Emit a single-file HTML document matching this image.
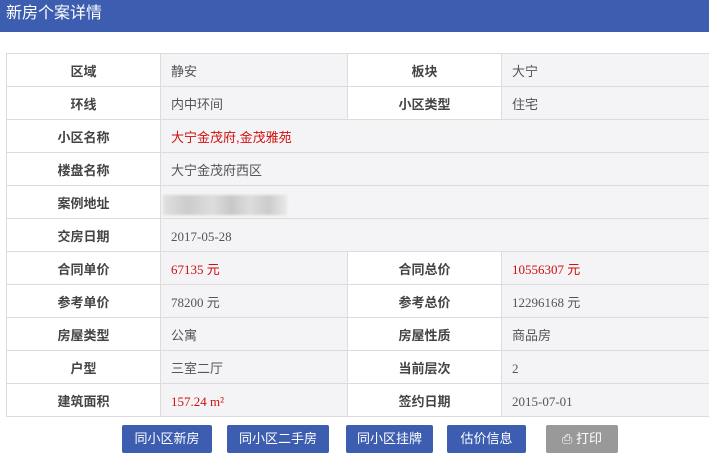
<!DOCTYPE html>
<html><head><meta charset="utf-8"><style>
body{margin:0;width:709px;height:467px;background:#fff;overflow:hidden;font-family:"Liberation Sans","Noto Sans CJK SC",sans-serif;position:relative}
.hd{position:absolute;left:0;top:0;width:709px;height:32px;background:#3c5db0;color:#fff;font-size:16px;line-height:28px;text-indent:6px}
table{position:absolute;left:6px;top:53px;border-collapse:collapse;width:710px;table-layout:fixed}
td{border:1px solid #dcdcdc;height:29px;padding:3px 0 0;font-size:13px;color:#444;line-height:29px;vertical-align:middle;white-space:nowrap;overflow:hidden}
td.l{background:#fff;text-align:center;font-weight:bold;color:#444}
td.v{background:#f4f3f5;padding-left:10px;color:#555}
.r{color:#d01010!important}
.n{font-family:"Liberation Serif","Noto Sans CJK SC",serif;font-size:13px}
.btn{position:absolute;top:425px;height:28px;line-height:28px;color:#fff;font-size:13px;text-align:center;background:#3c5db0;border-radius:2px}
.blur{display:inline-block;height:20px;width:124px;vertical-align:middle;background:linear-gradient(90deg,#e0e0e0,#ccc 20%,#ddd 40%,#c8c8c8 55%,#ddd 70%,#ccc 85%,#e8e8e8);filter:blur(1px)}
</style></head><body>
<div class="hd">新房个案详情</div>
<table>
<colgroup><col style="width:154px"><col style="width:187px"><col style="width:154px"><col style="width:215px"></colgroup>
<tr><td class="l">区域</td><td class="v">静安</td><td class="l">板块</td><td class="v">大宁</td></tr>
<tr><td class="l">环线</td><td class="v">内中环间</td><td class="l">小区类型</td><td class="v">住宅</td></tr>
<tr><td class="l">小区名称</td><td class="v r" colspan="3">大宁金茂府,金茂雅苑</td></tr>
<tr><td class="l">楼盘名称</td><td class="v" colspan="3">大宁金茂府西区</td></tr>
<tr><td class="l">案例地址</td><td class="v" colspan="3" style="padding-left:2px"><span class="blur"></span></td></tr>
<tr><td class="l">交房日期</td><td class="v n" colspan="3">2017-05-28</td></tr>
<tr><td class="l">合同单价</td><td class="v r n">67135 元</td><td class="l">合同总价</td><td class="v r n">10556307 元</td></tr>
<tr><td class="l">参考单价</td><td class="v n">78200 元</td><td class="l">参考总价</td><td class="v n">12296168 元</td></tr>
<tr><td class="l">房屋类型</td><td class="v">公寓</td><td class="l">房屋性质</td><td class="v">商品房</td></tr>
<tr><td class="l">户型</td><td class="v">三室二厅</td><td class="l">当前层次</td><td class="v n">2</td></tr>
<tr><td class="l">建筑面积</td><td class="v r n">157.24 m²</td><td class="l">签约日期</td><td class="v n">2015-07-01</td></tr>
</table>
<div class="btn" style="left:122px;width:90px">同小区新房</div>
<div class="btn" style="left:227px;width:102px">同小区二手房</div>
<div class="btn" style="left:346px;width:87px">同小区挂牌</div>
<div class="btn" style="left:447px;width:79px">估价信息</div>
<div class="btn" style="left:546px;width:72px;background:#999">⎙ 打印</div>
</body></html>
